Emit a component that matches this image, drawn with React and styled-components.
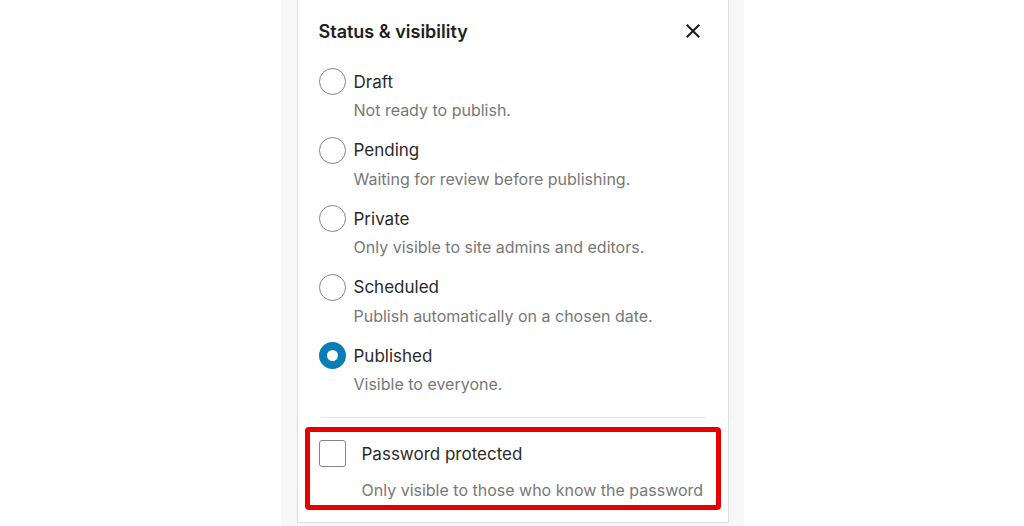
import styled, { createGlobalStyle } from 'styled-components';

const GlobalStyle = createGlobalStyle`
  html, body {
    margin: 0;
    padding: 0;
    background: #ffffff;
  }
  body {
    font-family: Inter, "Liberation Sans", sans-serif;
    color: #1e1e1e;
  }
`;

const Page = styled.div`
  width: 1024px;
  height: 526px;
  display: flex;
  justify-content: center;
  overflow: hidden;
`;

const Sidebar = styled.aside`
  width: 463px;
  height: 526px;
  background: #f8f8f8;
  padding: 0 15px 0 16px;
  box-sizing: border-box;
`;

const Panel = styled.section`
  height: 523px;
  background: #ffffff;
  border: 1px solid #dedede;
  border-top: none;
  box-sizing: border-box;
  padding: 16px 21px 0 21px;
`;

const Header = styled.header`
  height: 30px;
  display: flex;
  align-items: center;
  justify-content: space-between;
`;

const Title = styled.h2`
  margin: 0;
  font-size: 18px;
  font-weight: 600;
  line-height: normal;
  color: #1e1e1e;
`;

const CloseButton = styled.button`
  width: 24px;
  height: 24px;
  padding: 0;
  margin-right: 2px;
  border: none;
  background: none;
  display: flex;
  align-items: center;
  justify-content: center;
  color: #1e1e1e;
`;

const OptionList = styled.div`
  margin-top: 22px;
  display: flex;
  flex-direction: column;
  gap: 16.5px;
`;

const Option = styled.div`
  display: flex;
  flex-direction: column;
`;

const Row = styled.label`
  display: flex;
  align-items: center;
  gap: ${(props) => props.gap || 8}px;
  height: 27px;
`;

const Radio = styled.span`
  width: 27px;
  height: 27px;
  box-sizing: border-box;
  border-radius: 50%;
  flex-shrink: 0;
  border: ${(props) => (props.checked ? '8.5px solid #0a7cb8' : '1.5px solid #858585')};
  background: #ffffff;
`;

const Checkbox = styled.span`
  width: 27px;
  height: 27px;
  box-sizing: border-box;
  border: 1.5px solid #858585;
  border-radius: 3px;
  flex-shrink: 0;
`;

const Label = styled.span`
  font-size: 17px;
  line-height: 20px;
  color: #2a2a2a;
`;

const Description = styled.p`
  margin: ${(props) => props.top || 5}px 0 0 ${(props) => props.indent || 35}px;
  font-size: 16px;
  line-height: 20px;
  color: #787878;
  white-space: nowrap;
`;

const Divider = styled.hr`
  margin: 23px 1px 9px 2px;
  border: none;
  border-top: 1px solid #e8e8e8;
`;

const Highlight = styled.div`
  margin: 0 -14px;
  border: 5px solid #e60000;
  border-radius: 4px;
  padding: 8px 9px 5px 9px;
`;

const options = [
  { label: 'Draft', text: 'Not ready to publish.' },
  { label: 'Pending', text: 'Waiting for review before publishing.' },
  { label: 'Private', text: 'Only visible to site admins and editors.' },
  { label: 'Scheduled', text: 'Publish automatically on a chosen date.' },
  { label: 'Published', text: 'Visible to everyone.', checked: true },
];

const CloseIcon = () => (
  <svg width="14" height="14" viewBox="0 0 14 14" fill="none" stroke="currentColor" strokeWidth="2.1" strokeLinecap="square">
    <path d="M1.5 1.5l11 11M12.5 1.5l-11 11" />
  </svg>
);

const App = () => (
  <Page>
    <GlobalStyle />
    <Sidebar>
      <Panel>
        <Header>
          <Title>Status &amp; visibility</Title>
          <CloseButton aria-label="Close">
            <CloseIcon />
          </CloseButton>
        </Header>
        <OptionList>
          {options.map((o) => (
            <Option key={o.label}>
              <Row>
                <Radio checked={o.checked} />
                <Label>{o.label}</Label>
              </Row>
              <Description>{o.text}</Description>
            </Option>
          ))}
        </OptionList>
        <Divider />
        <Highlight>
          <Row gap={16}>
            <Checkbox />
            <Label>Password protected</Label>
          </Row>
          <Description top={13} indent={43}>
            Only visible to those who know the password
          </Description>
        </Highlight>
      </Panel>
    </Sidebar>
  </Page>
);

export default App;
